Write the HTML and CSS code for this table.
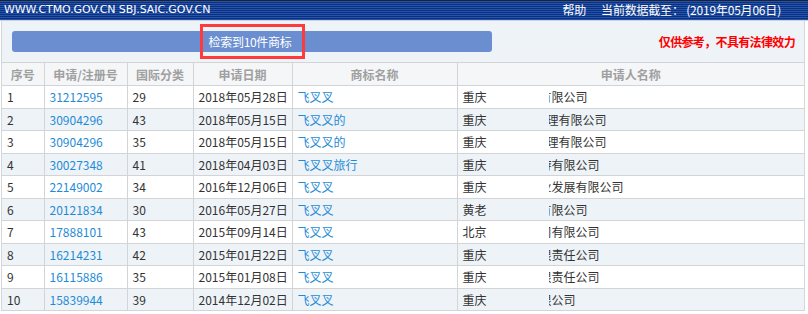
FILE: index.html
```html
<!DOCTYPE html>
<html lang="zh-CN">
<head>
<meta charset="utf-8">
<title>商标检索结果</title>
<link rel="stylesheet" href="styles.css">
</head>
<body>
<div class="topbar">
  <div class="site">WWW.CTMO.GOV.CN SBJ.SAIC.GOV.CN</div>
  <div class="topright"><span class="help">帮助</span><span>当前数据截至： (2019年05月06日)</span></div>
</div>
<div class="page">
  <div class="toolbar">
    <div class="resultbar"><span class="count">检索到10件商标</span><span class="mark"></span></div>
    <div class="notice">仅供参考，不具有法律效力</div>
  </div>
  <table class="grid">
    <colgroup>
      <col class="c1"><col class="c2"><col class="c3"><col class="c4"><col class="c5"><col class="c6">
    </colgroup>
    <thead>
      <tr><th>序号</th><th>申请/注册号</th><th>国际分类</th><th>申请日期</th><th>商标名称</th><th>申请人名称</th></tr>
    </thead>
    <tbody>
      <tr><td>1</td><td><a>31212595</a></td><td>29</td><td>2018年05月28日</td><td><a>飞叉叉</a></td><td><span class="city">重庆</span><span class="tail"><span class="cut">有限公司</span></span></td></tr>
      <tr><td>2</td><td><a>30904296</a></td><td>43</td><td>2018年05月15日</td><td><a>飞叉叉的</a></td><td><span class="city">重庆</span><span class="tail"><span class="cut small">理有限公司</span></span></td></tr>
      <tr><td>3</td><td><a>30904296</a></td><td>35</td><td>2018年05月15日</td><td><a>飞叉叉的</a></td><td><span class="city">重庆</span><span class="tail"><span class="cut small">理有限公司</span></span></td></tr>
      <tr><td>4</td><td><a>30027348</a></td><td>41</td><td>2018年04月03日</td><td><a>飞叉叉旅行</a></td><td><span class="city">重庆</span><span class="tail"><span class="cut">游有限公司</span></span></td></tr>
      <tr><td>5</td><td><a>22149002</a></td><td>34</td><td>2016年12月06日</td><td><a>飞叉叉</a></td><td><span class="city">重庆</span><span class="tail"><span class="cut">业发展有限公司</span></span></td></tr>
      <tr><td>6</td><td><a>20121834</a></td><td>30</td><td>2016年05月27日</td><td><a>飞叉叉</a></td><td><span class="city">黄老</span><span class="tail"><span class="cut">有限公司</span></span></td></tr>
      <tr><td>7</td><td><a>17888101</a></td><td>43</td><td>2015年09月14日</td><td><a>飞叉叉</a></td><td><span class="city">北京</span><span class="tail"><span class="cut">司有限公司</span></span></td></tr>
      <tr><td>8</td><td><a>16214231</a></td><td>42</td><td>2015年01月22日</td><td><a>飞叉叉</a></td><td><span class="city">重庆</span><span class="tail"><span class="cut">限责任公司</span></span></td></tr>
      <tr><td>9</td><td><a>16115886</a></td><td>35</td><td>2015年01月08日</td><td><a>飞叉叉</a></td><td><span class="city">重庆</span><span class="tail"><span class="cut">限责任公司</span></span></td></tr>
      <tr><td>10</td><td><a>15839944</a></td><td>39</td><td>2014年12月02日</td><td><a>飞叉叉</a></td><td><span class="city">重庆</span><span class="tail"><span class="cut">限公司</span></span></td></tr>
    </tbody>
  </table>
</div>
</body>
</html>
```
FILE: styles.css
```css
html, body {
  margin: 0;
  padding: 0;
  background: #ffffff;
}
body {
  font-family: "Noto Sans CJK SC", "Noto Sans", sans-serif;
  font-size: 12px;
  color: #333333;
}
.topbar {
  height: 20px;
  display: flex;
  justify-content: space-between;
  align-items: center;
  color: #ffffff;
  background:
    linear-gradient(to bottom, #20202c 0, #20202c 1px, transparent 1px),
    repeating-linear-gradient(to bottom, #0c2f80 0, #0c2f80 1px, #2354aa 1px, #2354aa 2px);
  border-bottom: 1px solid #c9d2e2;
  padding: 0 27px 0 4px;
  line-height: 20px;
}
.site {
  font-family: "DejaVu Sans", sans-serif;
  font-size: 11px;
  letter-spacing: -0.1px;
}
.topright {
  display: flex;
  gap: 15px;
  letter-spacing: -0.2px;
}
.page {
  margin: 0 3px 0 1px;
  border-left: 1px solid #d3d6da;
  border-right: 1px solid #d3d6da;
}
.toolbar {
  height: 41px;
  background: #eef3f8;
  display: flex;
  align-items: center;
  justify-content: space-between;
  padding: 0 9px 0 10px;
}
.resultbar {
  position: relative;
  width: 480px;
  height: 21px;
  background: #6a8ed0;
  border-radius: 3px;
  color: #ffffff;
  display: flex;
  align-items: center;
  justify-content: center;
  line-height: 21px;
}
.count {
  position: relative;
  left: -2px;
  letter-spacing: -0.3px;
}
.mark {
  position: absolute;
  left: 188px;
  top: -7px;
  width: 99px;
  height: 29px;
  border: 3px solid #ff3a3a;
}
.notice {
  color: #ff0000;
  font-weight: 700;
  font-size: 12px;
  letter-spacing: -0.65px;
}
.grid {
  width: 100%;
  border-collapse: collapse;
  table-layout: fixed;
}
.c1 { width: 42px; }
.c2 { width: 83px; }
.c3 { width: 66px; }
.c4 { width: 99px; }
.c5 { width: 165px; }
.grid th, .grid td {
  border: 1px solid #d2d4d7;
  padding: 0 0 0 5px;
  text-align: left;
  white-space: nowrap;
  overflow: hidden;
  font-weight: 400;
}
.grid th:first-child, .grid td:first-child { border-left: none; }
.grid th:last-child, .grid td:last-child { border-right: none; }
.grid th {
  height: 22px;
  background: #f4f6f8;
  color: #a0a0a0;
  font-weight: 700;
  text-align: center;
  padding: 0;
}
.grid td {
  height: 21.5px;
  line-height: 21px;
}
.grid tbody tr:nth-child(even) td {
  background: #eef3f8;
}
.grid a {
  color: #1f8bd6;
  text-decoration: none;
}
.city {
  display: inline-block;
  width: 86px;
}
.tail {
  display: inline-block;
  overflow: hidden;
  vertical-align: top;
}
.cut {
  display: inline-block;
  margin-left: -9px;
}
.cut.small {
  margin-left: -2px;
}
```
